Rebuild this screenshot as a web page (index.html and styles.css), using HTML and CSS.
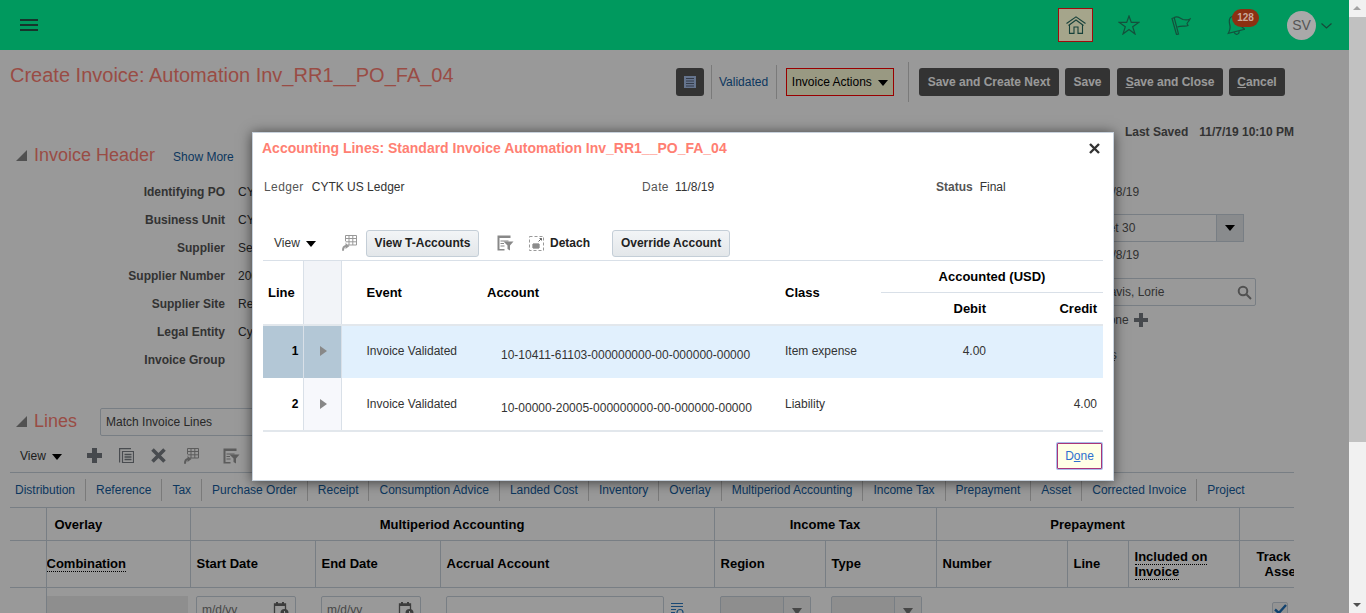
FILE: index.html
```html
<!DOCTYPE html>
<html lang="en">
<head>
    <meta charset="UTF-8">
    <meta name="viewport" content="width=device-width, initial-scale=1.0">
    <title>Create Invoice</title>
    <link rel="stylesheet" href="styles.css">
</head>
<body>
    <svg class="sprite" width="0" height="0">
        <symbol id="i-freeze" viewBox="0 0 16 16">
            <path d="M4.500 .5h11v9.500H7M4.500 .5V6M4.500 3.500h11M4.500 6.800h11M8 .5V10M11.800 .5V10" fill="none" stroke="currentColor"/>
            <path d="M1 15.800C1 12.500 2 10.500 4.500 10V8L8.500 11 4.500 14V12C3.500 12.500 3 14 3 15.800z" fill="currentColor"/>
        </symbol>
        <symbol id="i-filter" viewBox="0 0 17 16">
            <path d="M.5 .5h13v2.500H.5zM.5 3h2v11h5v1.500H.5zM3.500 5.500h8v1h-8zM3.500 8h3.500v1H3.500zM3.500 10.500h4v1h-4z" fill="currentColor"/>
            <path d="M6.500 6.500H16.500L13 10.500V15.500L10.500 14V10.500z" fill="currentColor"/>
        </symbol>
        <symbol id="i-calendar" viewBox="0 0 16 16">
            <path d="M1.500 3h11v11h-11z" fill="none" stroke="currentColor" stroke-width="1.300"/>
            <path d="M3 1h2v3H3zM9 1h2v3H9zM1.500 3h11v2h-11z" fill="currentColor"/>
            <circle cx="11.500" cy="12" r="4" fill="currentColor"/>
            <path d="M11.500 10v2.300h2" fill="none" stroke="#fff"/>
        </symbol>
    </svg>

    <div class="app">
        <div class="main">
            <header class="topbar">
                <div class="hamburger"><span></span><span></span><span></span></div>
                <div class="top-icons">
                    <div class="home-box">
                        <svg width="20" height="18" viewBox="0 0 20 18" fill="none" stroke="#17403a" stroke-width="1.100">
                            <path d="M.5 7.500 10 .8 19.500 7.500"/>
                            <path d="M2.500 9.500 10 4l7.500 5.500"/>
                            <path d="M3.500 9V17.400H8V11h4V17.400h4.500V9"/>
                        </svg>
                    </div>
                    <svg class="star" width="22" height="20" viewBox="0 0 22 20" fill="none" stroke="#14503c" stroke-width="1.200">
                        <path d="M11 1 13.300 7.400H20.700L14.700 11.700 17 19 11 14.500 5 19 7.300 11.700 1.300 7.400H8.700z"/>
                    </svg>
                    <svg class="flag" width="20" height="20" viewBox="0 0 20 20" fill="none" stroke="#14503c" stroke-width="1.200">
                        <path d="M1 3.500 5.500 19.500 7.500 19 3.200 2.500 1 3.500zM3.200 2.500C7 .5 9 3.500 12 4.500c3 .8 5 .5 7-.5-1 2-2.500 3.500-3 4.500.2 1 .8 1.500 1 2-3 1.500-6-.5-10.500 1.500"/>
                    </svg>
                    <div class="bell-wrap">
                        <svg width="20" height="22" viewBox="0 0 20 22" fill="none" stroke="#14503c" stroke-width="1.200">
                            <g transform="rotate(-14 10 11)">
                                <path d="M10 2C6.500 2 5 5 5 9.500c0 3.500-1 5.500-3.500 8h17C16 15 15 13 15 9.500 15 5 13.500 2 10 2zM7.500 17.500c0 2 1 3 2.500 3s2.500-1 2.500-3"/>
                            </g>
                        </svg>
                        <span class="badge">128</span>
                    </div>
                    <div class="avatar">SV</div>
                    <svg class="chevron" width="11" height="6" viewBox="0 0 11 6" fill="none" stroke="#174a3a" stroke-width="1.200">
                        <path d="M.5 .5 5.500 5 10.500 .5"/>
                    </svg>
                </div>
            </header>

            <div class="page-head">
                <h1 class="page-title">Create Invoice: Automation Inv_RR1__PO_FA_04</h1>
                <div class="actions">
                    <button class="btn-dark btn-icon">
                        <svg width="12" height="12" viewBox="0 0 12 12">
                            <path d="M0 0h12v12H0z" fill="#a9c2ec"/>
                            <path d="M2 2.500h8M2 5h8M2 7.500h8M2 10h8" stroke="#56637a"/>
                        </svg>
                    </button>
                    <a class="status-link">Validated</a>
                    <button class="invoice-actions">Invoice Actions <i class="caret"></i></button>
                    <button class="btn-dark save-next">Save and Create Next</button>
                    <button class="btn-dark save">Save</button>
                    <button class="btn-dark save-close"><u>S</u>ave and Close</button>
                    <button class="btn-dark cancel"><u>C</u>ancel</button>
                </div>
            </div>

            <div class="last-saved"><b>Last Saved</b><b>11/7/19 10:10 PM</b></div>

            <div class="section-head">
                <i class="disclose"></i>
                <h2>Invoice Header</h2>
                <a class="show-more">Show More</a>
            </div>

            <div class="form">
                <div class="form-col">
                    <div class="form-row"><label>Identifying PO</label><span>CYTK PO 1001</span></div>
                    <div class="form-row"><label>Business Unit</label><span>CYTK US BU</span></div>
                    <div class="form-row"><label>Supplier</label><span>Services Inc</span></div>
                    <div class="form-row"><label>Supplier Number</label><span>2000145</span></div>
                    <div class="form-row"><label>Supplier Site</label><span>Remit</span></div>
                    <div class="form-row"><label>Legal Entity</label><span>Cytek US</span></div>
                    <div class="form-row"><label>Invoice Group</label><span></span></div>
                </div>
                <div class="side-col">
                    <div class="side-text first">11/8/19</div>
                    <div class="side-input">
                        <span>Net 30</span>
                        <i class="select-btn"><i class="caret"></i></i>
                    </div>
                    <div class="side-text">11/8/19</div>
                    <div class="side-input wide">
                        <span>Davis, Lorie</span>
                        <svg width="15" height="15" viewBox="0 0 15 15" fill="none" stroke="#888" stroke-width="2">
                            <circle cx="6" cy="6" r="4.300"/><path d="M9.300 9.300 14 14"/>
                        </svg>
                    </div>
                    <div class="side-text after-input">None <i class="plus small"></i></div>
                    <div class="side-text attach">Attachments</div>
                </div>
            </div>

            <div class="section-head lines-head">
                <i class="disclose"></i>
                <h2>Lines</h2>
                <div class="match-box">Match Invoice Lines</div>
            </div>

            <div class="lines-toolbar">
                <span class="view-menu">View <i class="caret"></i></span>
                <i class="plus tool"></i>
                <svg class="tool" width="15" height="15" viewBox="0 0 15 15" fill="none" stroke="#7a7f85" stroke-width="1.200">
                    <path d="M.6 14.500V.6H12"/>
                    <path d="M3.500 3.500h11v11h-11z"/>
                    <path d="M5.500 6.500h7M5.500 9h7M5.500 11.500h7" stroke-width="1.400"/>
                </svg>
                <svg class="tool" width="15" height="15" viewBox="0 0 15 15" fill="none" stroke="#7a7f85" stroke-width="3.600">
                    <path d="M1.500 1.500 13.500 13.500M13.500 1.500 1.500 13.500"/>
                </svg>
                <svg class="tool muted freeze" width="16" height="16"><use href="#i-freeze"/></svg>
                <svg class="tool muted" width="17" height="16"><use href="#i-filter"/></svg>
            </div>

            <nav class="tabs">
                <a>Distribution</a><a>Reference</a><a>Tax</a><a>Purchase Order</a><a>Receipt</a><a>Consumption Advice</a><a>Landed Cost</a><a>Inventory</a><a>Overlay</a><a>Multiperiod Accounting</a><a>Income Tax</a><a>Prepayment</a><a>Asset</a><a>Corrected Invoice</a><a>Project</a>
            </nav>

            <div class="grid-wrap">
                <table class="lines-grid">
                    <colgroup>
                        <col class="c36"><col class="c144"><col class="c125"><col class="c125"><col class="c274"><col class="c111"><col class="c111"><col class="c131"><col class="c61"><col class="c111"><col class="c55">
                    </colgroup>
                    <thead>
                        <tr class="group-row">
                            <th class="blank"></th>
                            <th class="left overlay-head">Overlay</th>
                            <th colspan="3">Multiperiod Accounting</th>
                            <th colspan="2">Income Tax</th>
                            <th colspan="3">Prepayment</th>
                            <th></th>
                        </tr>
                        <tr class="name-row">
                            <th class="blank"></th>
                            <th class="left flush"><span class="dotted">Combination</span></th>
                            <th class="left">Start Date</th>
                            <th class="left">End Date</th>
                            <th class="left">Accrual Account</th>
                            <th class="left">Region</th>
                            <th class="left">Type</th>
                            <th class="left">Number</th>
                            <th class="left">Line</th>
                            <th class="left"><span class="dotted">Included on</span><br><span class="dotted">Invoice</span></th>
                            <th class="track">Track<br><span class="asset">Asset</span></th>
                        </tr>
                    </thead>
                    <tbody>
                        <tr class="data-row">
                            <td class="blank"></td>
                            <td class="flush"><div class="field-off"></div></td>
                            <td><div class="date-field">m/d/yy<svg width="16" height="16"><use href="#i-calendar"/></svg></div></td>
                            <td><div class="date-field">m/d/yy<svg width="16" height="16"><use href="#i-calendar"/></svg></div></td>
                            <td>
                                <div class="acct-cell">
                                    <div class="acct-field"></div>
                                    <svg width="14" height="15" viewBox="0 0 14 15" fill="none" stroke="#2b79c2" stroke-width="1.200">
                                        <path d="M1 1.500h12M1 4.500h12M1 7.500h5M1 10.500h4M1 13.500h5"/>
                                        <circle cx="10" cy="10.500" r="3"/>
                                    </svg>
                                </div>
                            </td>
                            <td><div class="select-off"><i></i></div></td>
                            <td><div class="select-off"><i></i></div></td>
                            <td></td>
                            <td></td>
                            <td></td>
                            <td>
                                <div class="check">
                                    <svg width="13" height="11" viewBox="0 0 13 11" fill="none" stroke="#1f6fb8" stroke-width="2.400">
                                        <path d="M1 5.500 4.800 9 12 1"/>
                                    </svg>
                                </div>
                            </td>
                        </tr>
                    </tbody>
                </table>
            </div>

            <div class="overlay"></div>

            <section class="dialog">
                <div class="dialog-title">
                    <h3>Accounting Lines: Standard Invoice Automation Inv_RR1__PO_FA_04</h3>
                    <svg width="11" height="11" viewBox="0 0 11 11" fill="none" stroke="#333" stroke-width="2.400">
                        <path d="M1 1 10 10M10 1 1 10"/>
                    </svg>
                </div>
                <div class="dialog-info">
                    <div><label>Ledger</label>CYTK US Ledger</div>
                    <div><label class="date-label">Date</label>11/8/19</div>
                    <div><label class="strong">Status</label>Final</div>
                </div>
                <div class="dialog-tools">
                    <span class="view-menu">View <i class="caret"></i></span>
                    <svg class="t-freeze" width="16" height="16"><use href="#i-freeze"/></svg>
                    <button class="btn-light t-accounts">View T-Accounts</button>
                    <svg class="t-filter" width="17" height="16"><use href="#i-filter"/></svg>
                    <svg class="t-detach" width="15" height="15" viewBox="0 0 15 15" fill="none" stroke="#999">
                        <path d="M.5 .5h14v14H.5z" stroke-dasharray="3 2"/>
                        <path d="M4 8h6v4H4zM6 8v4M8 8v4M4 10h6" stroke="#666"/>
                        <path d="M9.500 5.500l3-3M10.500 2.500h2v2" stroke="#666"/>
                    </svg>
                    <span class="detach">Detach</span>
                    <button class="btn-light override">Override Account</button>
                </div>
                <table class="acct-table">
                    <colgroup>
                        <col class="a40"><col class="a38"><col class="a140"><col class="a298"><col class="a102"><col class="a111"><col class="a111">
                    </colgroup>
                    <thead>
                        <tr class="head-top">
                            <th rowspan="2">Line</th>
                            <th rowspan="2" class="arrow-col"></th>
                            <th rowspan="2" class="event">Event</th>
                            <th rowspan="2" class="account">Account</th>
                            <th rowspan="2" class="class-col">Class</th>
                            <th colspan="2" class="accounted">Accounted (USD)</th>
                        </tr>
                        <tr class="head-sub">
                            <th class="num">Debit</th>
                            <th class="num">Credit</th>
                        </tr>
                    </thead>
                    <tbody>
                        <tr class="selected">
                            <td class="line-no">1</td>
                            <td class="arrow-col"><i class="row-arrow"></i></td>
                            <td class="event">Invoice Validated</td>
                            <td class="acct-code">10-10411-61103-000000000-00-000000-00000</td>
                            <td class="class-col">Item expense</td>
                            <td class="num">4.00</td>
                            <td class="num"></td>
                        </tr>
                        <tr>
                            <td class="line-no">2</td>
                            <td class="arrow-col"><i class="row-arrow"></i></td>
                            <td class="event">Invoice Validated</td>
                            <td class="acct-code">10-00000-20005-000000000-00-000000-00000</td>
                            <td class="class-col">Liability</td>
                            <td class="num"></td>
                            <td class="num">4.00</td>
                        </tr>
                    </tbody>
                </table>
                <div class="dialog-foot">
                    <button class="btn-done">D<u>o</u>ne</button>
                </div>
            </section>
        </div>

        <div class="scrollbar">
            <i class="sb-up"></i>
            <div class="sb-thumb"></div>
            <i class="sb-down"></i>
        </div>
    </div>
</body>
</html>
```

FILE: styles.css
```css
* {
    box-sizing: border-box;
}
html, body {
    margin: 0;
    height: 100%;
    overflow: hidden;
}
body {
    background: #fff;
    font-family: "Liberation Sans", Arial, sans-serif;
    font-size: 12px;
    color: #333;
}
button {
    font-family: inherit;
    cursor: pointer;
}
.sprite {
    position: absolute;
}
.app {
    display: flex;
    height: 613px;
}
.main {
    position: relative;
    width: 1349px;
    height: 613px;
    overflow: hidden;
}

/* top bar */
.topbar {
    height: 50px;
    background: #00995e;
    display: flex;
    align-items: center;
    justify-content: space-between;
    padding-left: 20px;
    position: relative;
    z-index: 2;
}
.hamburger {
    width: 18px;
    display: flex;
    flex-direction: column;
    gap: 3px;
}
.hamburger span {
    height: 2px;
    background: #17352c;
}
.top-icons {
    display: flex;
    align-items: center;
    padding-right: 17px;
}
.home-box {
    width: 35px;
    height: 34px;
    background: #a5a58b;
    border: 1px solid #a00b0b;
    display: flex;
    align-items: center;
    justify-content: center;
    margin-right: 25px;
}
.flag {
    margin-left: 31px;
}
.bell-wrap {
    position: relative;
    margin-left: 34px;
    width: 20px;
    height: 22px;
}
.badge {
    position: absolute;
    left: 7px;
    top: -5px;
    width: 27px;
    height: 18px;
    line-height: 18px;
    border-radius: 9px;
    background: #8c3012;
    color: #c9a99b;
    font-size: 10px;
    font-weight: bold;
    text-align: center;
}
.avatar {
    width: 29px;
    height: 29px;
    border-radius: 50%;
    background: #a9a9a9;
    color: #555;
    font-size: 14px;
    line-height: 29px;
    text-align: center;
    margin-left: 42px;
}
.chevron {
    margin-left: 5px;
    margin-top: 2px;
}

/* page head */
.page-head {
    height: 70px;
    padding-left: 10px;
    display: flex;
    justify-content: space-between;
}
.page-title {
    margin: 13px 0 0;
    font-size: 20px;
    font-weight: normal;
    line-height: 24px;
    color: #ff7f73;
}
.actions {
    display: flex;
    align-items: flex-start;
    padding-top: 18px;
    padding-right: 64px;
}
.btn-dark {
    height: 28px;
    border: none;
    border-radius: 3px;
    background: #555;
    color: #fff;
    font-size: 12px;
    font-weight: bold;
    padding: 0;
}
.btn-icon {
    width: 28px;
    display: flex;
    align-items: center;
    justify-content: center;
}
.status-link {
    height: 34px;
    line-height: 34px;
    color: #145c9e;
    margin: -3px 0 0 7px;
    padding: 0 6px 0 7px;
    border-left: 1px solid #ccc;
    border-right: 1px solid #ccc;
    width: 66px;
}
.invoice-actions {
    width: 108px;
    height: 28px;
    margin-left: 9px;
    border: 1px solid #f00;
    background: #ffffd9;
    font-size: 12px;
    color: #000;
    padding: 0;
}
.caret {
    display: inline-block;
    width: 0;
    height: 0;
    border-left: 5px solid transparent;
    border-right: 5px solid transparent;
    border-top: 6px solid #000;
    margin-left: 3px;
}
.save-next {
    width: 140px;
    margin-left: 25px;
    position: relative;
}
.save-next::before {
    content: "";
    position: absolute;
    left: -11px;
    top: -6px;
    height: 40px;
    border-left: 1px solid #ccc;
}
.save {
    width: 45px;
    margin-left: 6px;
}
.save-close {
    width: 106px;
    margin-left: 7px;
}
.cancel {
    width: 56px;
    margin-left: 6px;
}
.last-saved {
    height: 23px;
    display: flex;
    justify-content: flex-end;
    align-items: center;
    gap: 11px;
    padding-right: 55px;
    color: #555;
}

/* sections */
.section-head {
    height: 24px;
    display: flex;
    align-items: center;
    padding-left: 16px;
}
.disclose {
    width: 0;
    height: 0;
    border-left: 11px solid transparent;
    border-bottom: 11px solid #888;
    margin-right: 7px;
}
.section-head h2 {
    margin: 0;
    font-size: 18px;
    font-weight: normal;
    color: #ff7f73;
}
.show-more {
    margin-left: 18px;
    margin-top: 3px;
    color: #145c9e;
}
.form {
    margin-top: 11px;
    display: flex;
    height: 196px;
}
.form-col {
    width: 1090px;
}
.form-row {
    height: 28px;
    display: flex;
    align-items: center;
    gap: 13px;
}
.form-row label {
    width: 225px;
    text-align: right;
    font-weight: bold;
    color: #555;
}
.side-text {
    height: 27px;
    line-height: 27px;
    margin-left: 10px;
    color: #555;
}
.side-text.first {
    height: 28px;
    line-height: 28px;
}
.side-text.after-input {
    margin-top: 1px;
}
.side-text.attach {
    margin: 8px 0 0 -40px;
    text-decoration: underline dotted;
}
.side-input {
    margin-top: 8px;
    height: 28px;
    width: 154px;
    border: 1px solid #c9d3dc;
    border-radius: 2px;
    display: flex;
    align-items: center;
    justify-content: space-between;
    padding-left: 9px;
    color: #555;
}
.side-input.wide {
    width: 166px;
    margin-top: 9px;
    padding-left: 10px;
    padding-right: 3px;
}
.select-btn {
    width: 28px;
    height: 28px;
    margin-right: -1px;
    border: 1px solid #c9d3dc;
    background: #e4e8ec;
    display: flex;
    align-items: center;
    justify-content: center;
}
.select-btn .caret {
    margin: 0;
}
.plus {
    display: inline-block;
    width: 15px;
    height: 15px;
    background:
        linear-gradient(#767b80, #767b80) center / 15px 5px no-repeat,
        linear-gradient(#767b80, #767b80) center / 5px 15px no-repeat;
}
.plus.small {
    width: 14px;
    height: 14px;
    vertical-align: -3px;
    margin-left: 2px;
    background-size: 14px 4px, 4px 14px;
}
.lines-head {
    margin-top: 35px;
}
.match-box {
    margin: 2px 0 0 23px;
    width: 300px;
    height: 28px;
    line-height: 26px;
    padding-left: 5px;
    border: 1px solid #c9d3dc;
    border-radius: 2px;
    color: #444;
}
.lines-toolbar {
    margin: 0 55px 0 10px;
    padding: 15px 0 0 10px;
    height: 40px;
    display: flex;
    align-items: flex-start;
    border-bottom: 1px solid #c9d3dc;
    color: #666;
}
.view-menu {
    color: #333;
    line-height: 16px;
    width: 67px;
}
.tool {
    margin-right: 17px;
    flex: none;
}
.muted {
    color: #999;
}
.freeze {
    margin-right: 24px;
}
.tabs {
    margin: 0 55px 0 10px;
    height: 35px;
    display: flex;
    align-items: center;
    border-bottom: 1px solid #c9d3dc;
}
.tabs a {
    color: #145c9e;
    padding: 0 10px;
    line-height: 22px;
    border-left: 1px solid #ccc;
}
.tabs a:first-child {
    border-left: none;
    padding-left: 5px;
}

/* lines grid */
.grid-wrap {
    margin-left: 10px;
    width: 1284px;
    overflow: hidden;
}
.lines-grid {
    width: 1284px;
    table-layout: fixed;
    border-collapse: collapse;
}
.c36 { width: 36px; }
.c144 { width: 144px; }
.c125 { width: 125px; }
.c274 { width: 274px; }
.c111 { width: 111px; }
.c131 { width: 131px; }
.c61 { width: 61px; }
.c55 { width: 55px; }
.lines-grid th {
    border: 1px solid #c9d3dc;
    border-top: none;
    font-size: 13px;
    color: #000;
    padding: 0 6px;
    white-space: nowrap;
    overflow: hidden;
}
.lines-grid th:last-child {
    border-right: none;
}
.lines-grid th.blank,
.lines-grid td.blank {
    border-left: none;
}
.lines-grid th.left {
    text-align: left;
}
.lines-grid th.flush,
.lines-grid td.flush {
    padding-left: 0;
}
.lines-grid th.overlay-head {
    padding-left: 8px;
}
.group-row th {
    height: 32px;
    padding-top: 1px;
}
.name-row th {
    height: 47px;
    line-height: 15px;
}
.dotted {
    border-bottom: 1px dotted #000;
}
.lines-grid th.track {
    padding: 0 0 0 17px;
    text-align: left;
}
.asset {
    margin-left: 8px;
}
.data-row td {
    height: 40px;
    padding: 8px 6px 0 6px;
    vertical-align: top;
}
.data-row td:first-child {
    padding: 0;
}
.data-row td.blank + td {
    border-left: 1px solid #c9d3dc;
}
.field-off {
    width: 141px;
    height: 30px;
    background: #ededed;
}
.date-field {
    width: 100px;
    height: 30px;
    border: 1px solid #c9d3dc;
    border-radius: 2px;
    padding: 6px 0 0 5px;
    display: flex;
    justify-content: space-between;
    color: #777;
}
.date-field svg {
    color: #666;
    margin-right: 6px;
    margin-top: -2px;
}
.acct-cell {
    display: flex;
    gap: 6px;
}
.acct-cell svg {
    margin-top: 6px;
    flex: none;
}
.acct-field {
    width: 218px;
    height: 30px;
    border: 1px solid #c9d3dc;
    border-radius: 2px;
}
.select-off {
    width: 91px;
    height: 30px;
    background: #ededed;
    border: 1px solid #c9d3dc;
    border-radius: 2px;
    position: relative;
}
.select-off i {
    position: absolute;
    right: 0;
    top: 0;
    bottom: 0;
    width: 27px;
    border-left: 1px solid #c9d3dc;
    background: #f2f2f2;
}
.select-off i::after {
    content: "";
    position: absolute;
    left: 8px;
    top: 11px;
    border-left: 5px solid transparent;
    border-right: 5px solid transparent;
    border-top: 7px solid #777;
}
.check {
    width: 16px;
    height: 16px;
    margin: 6px 0 0 27px;
    border: 1px solid #c9d3dc;
    border-radius: 2px;
    background: #f5f5f5;
    display: flex;
    align-items: center;
    justify-content: center;
}

/* modal */
.overlay {
    position: absolute;
    left: 0;
    right: 0;
    top: 50px;
    bottom: 0;
    background: rgba(0, 0, 0, 0.4);
}
.dialog {
    position: absolute;
    left: 252px;
    top: 132px;
    width: 862px;
    height: 349px;
    background: #fff;
    border: 1px solid #c8d2dd;
    box-shadow: 0 1px 12px rgba(0, 0, 0, 0.6);
    padding: 1px 10px 0;
}
.dialog-title {
    height: 28px;
    display: flex;
    align-items: center;
    justify-content: space-between;
    padding-right: 3px;
}
.dialog-title h3 {
    margin: 0 0 0 -1px;
    font-size: 14px;
    color: #ff7f73;
}
.dialog-info {
    margin: 12px 0 0 1px;
    height: 26px;
    display: grid;
    grid-template-columns: 378px 294px auto;
    align-items: center;
    color: #333;
}
.dialog-info label {
    margin-right: 8px;
    color: #555;
    letter-spacing: 0.4px;
}
.dialog-info label.date-label {
    margin-right: 6px;
}
.dialog-info label.strong {
    font-weight: bold;
    letter-spacing: 0;
    margin-right: 7px;
}
.dialog-tools {
    margin-top: 28px;
    height: 30px;
    display: flex;
    align-items: center;
    padding-left: 11px;
}
.t-freeze {
    color: #999;
}
.btn-light {
    height: 27px;
    border: 1px solid #c4ced7;
    border-radius: 3px;
    background: linear-gradient(#f2f4f6, #e3e7ea);
    font-size: 12px;
    font-weight: bold;
    color: #222;
    padding: 0;
}
.t-accounts {
    width: 113px;
    margin-left: 9px;
}
.t-filter {
    margin-left: 18px;
    color: #888;
}
.t-detach {
    margin-left: 15px;
}
.detach {
    margin-left: 6px;
    font-weight: bold;
    color: #222;
    width: 62px;
}
.override {
    width: 118px;
}
.acct-table {
    width: 840px;
    margin-top: 2px;
    table-layout: fixed;
    border-collapse: collapse;
}
.a40 { width: 40px; }
.a38 { width: 38px; }
.a140 { width: 140px; }
.a298 { width: 298px; }
.a102 { width: 102px; }
.a111 { width: 111px; }
.acct-table th {
    font-size: 13px;
    color: #000;
    text-align: left;
    padding: 0 5px;
}
.head-top th {
    height: 32px;
}
.head-sub th {
    height: 32px;
}
.acct-table thead {
    border-top: 1px solid #d9e0e8;
}
.acct-table thead tr:last-child th {
    border-bottom: 2px solid #e2e7ec;
}
.acct-table th[rowspan] {
    border-bottom: 2px solid #e2e7ec;
}
.acct-table th.accounted {
    text-align: center;
    border-bottom: 1px solid #d9e0e8;
}
.acct-table .arrow-col {
    border-left: 1px solid #d9e0e8;
    border-right: 1px solid #d9e0e8;
    background: #f7f8fc;
}
.acct-table th.arrow-col {
    background: #f2f4f8;
}
.acct-table td {
    height: 53px;
    padding: 0 6px;
    color: #333;
}
.acct-table tbody tr:last-child {
    border-bottom: 2px solid #e2e7ec;
}
.acct-table th.event,
.acct-table td.event {
    padding-left: 25px;
}
.acct-table th.account {
    padding-left: 6px;
}
.acct-table td.acct-code {
    padding: 6px 0 0 20px;
    white-space: nowrap;
}
.acct-table tr:last-child td.acct-code {
    padding-top: 8px;
}
.acct-table .class-col {
    padding-left: 6px;
}
.acct-table .num,
.acct-table th.num {
    text-align: right;
    padding-right: 6px;
}
.acct-table td.line-no {
    text-align: right;
    font-weight: bold;
    color: #000;
    padding-right: 4px;
}
.selected td {
    background: #e1f0fd;
    padding-bottom: 2px;
}
.acct-table .selected td.line-no,
.acct-table .selected td.arrow-col {
    background: #b3c7d6;
}
.row-arrow {
    display: block;
    width: 0;
    height: 0;
    margin-left: 10px;
    border-top: 5px solid transparent;
    border-bottom: 5px solid transparent;
    border-left: 7px solid #888;
}
.dialog-foot {
    display: flex;
    justify-content: flex-end;
    padding: 11px 1px 0 0;
}
.btn-done {
    width: 45px;
    height: 26px;
    border: 1px solid #a8357a;
    box-shadow: 0 0 0 1px #a9bdea;
    border-radius: 1px;
    background: #ffffe6;
    color: #2d6fd0;
    font-size: 12px;
    padding: 0;
}

/* scrollbar */
.scrollbar {
    width: 17px;
    height: 613px;
    background: #f1f1f1;
    position: relative;
}
.sb-thumb {
    position: absolute;
    left: 0;
    top: 17px;
    width: 17px;
    height: 425px;
    background: #c1c1c1;
}
.sb-up,
.sb-down {
    position: absolute;
    left: 4px;
    border-left: 4px solid transparent;
    border-right: 4px solid transparent;
}
.sb-up {
    top: 6px;
    border-bottom: 4px solid #a3a3a3;
}
.sb-down {
    bottom: 6px;
    border-top: 4px solid #505050;
}
```
